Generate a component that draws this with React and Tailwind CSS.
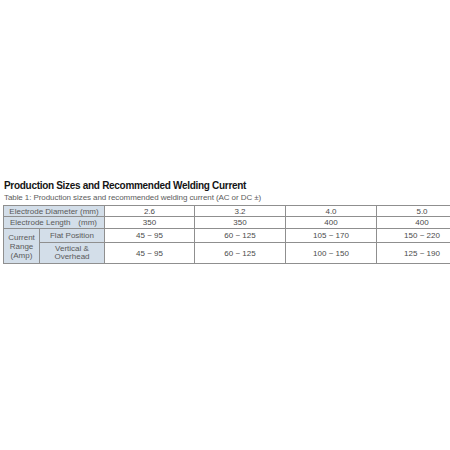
const columns = ["2.6", "3.2", "4.0", "5.0"];
const lengths = ["350", "350", "400", "400"];
const flat = ["45 ~ 95", "60 ~ 125", "105 ~ 170", "150 ~ 220"];
const vertical = ["45 ~ 95", "60 ~ 125", "100 ~ 150", "125 ~ 190"];

const label = "bg-[#d3dee9] text-[#5a5a5a] border-r border-b border-[#8f8f8f]";
const cell = "flex items-center justify-center text-[#4a4a4a] border-r border-b border-[#8f8f8f]";

function App() {
  return (
    <div
      className="w-[450px] h-[450px] overflow-hidden bg-white pt-[180px] pl-[3px]"
      style={{ fontFamily: '"Liberation Sans", Arial, sans-serif' }}
    >
      <h1 className="pl-[1px] text-[10px] leading-[12px] font-bold tracking-[-0.3px] text-[#141414]">
        Production Sizes and Recommended Welding Current
      </h1>
      <p className="pl-[1px] mt-[1px] text-[8px] leading-[10px] tracking-[-0.08px] text-[#5c5c5c]">
        Table 1: Production sizes and recommended welding current (AC or DC ±)
      </p>

      <div className="mt-[2px] w-[469px] grid grid-cols-[36px_65px_90px_91px_91px_91px] grid-rows-[11px_12px_14px_21px] border-t border-l border-[#8f8f8f] text-[8px] leading-[9px]">
        <div className={`${label} col-span-2 flex items-center justify-center`}>
          Electrode Diameter (mm)
        </div>
        {columns.map((c) => (
          <div key={c} className={cell}>{c}</div>
        ))}

        <div className={`${label} col-span-2 flex items-center justify-between pl-[6px] pr-[7px]`}>
          <span>Electrode Length</span>
          <span>(mm)</span>
        </div>
        {lengths.map((c, i) => (
          <div key={i} className={cell}>{c}</div>
        ))}

        <div className={`${label} row-span-2 flex flex-col items-center justify-center text-center pt-[1px]`}>
          <span>Current</span>
          <span>Range</span>
          <span>(Amp)</span>
        </div>
        <div className={`${label} flex items-center justify-center`}>Flat Position</div>
        {flat.map((c, i) => (
          <div key={i} className={cell}>{c}</div>
        ))}

        <div className={`${label} flex flex-col items-center justify-center leading-[8.5px] text-center`}>
          <span>Vertical &amp;</span>
          <span>Overhead</span>
        </div>
        {vertical.map((c, i) => (
          <div key={i} className={cell}>{c}</div>
        ))}
      </div>
    </div>
  );
}

export default App;
